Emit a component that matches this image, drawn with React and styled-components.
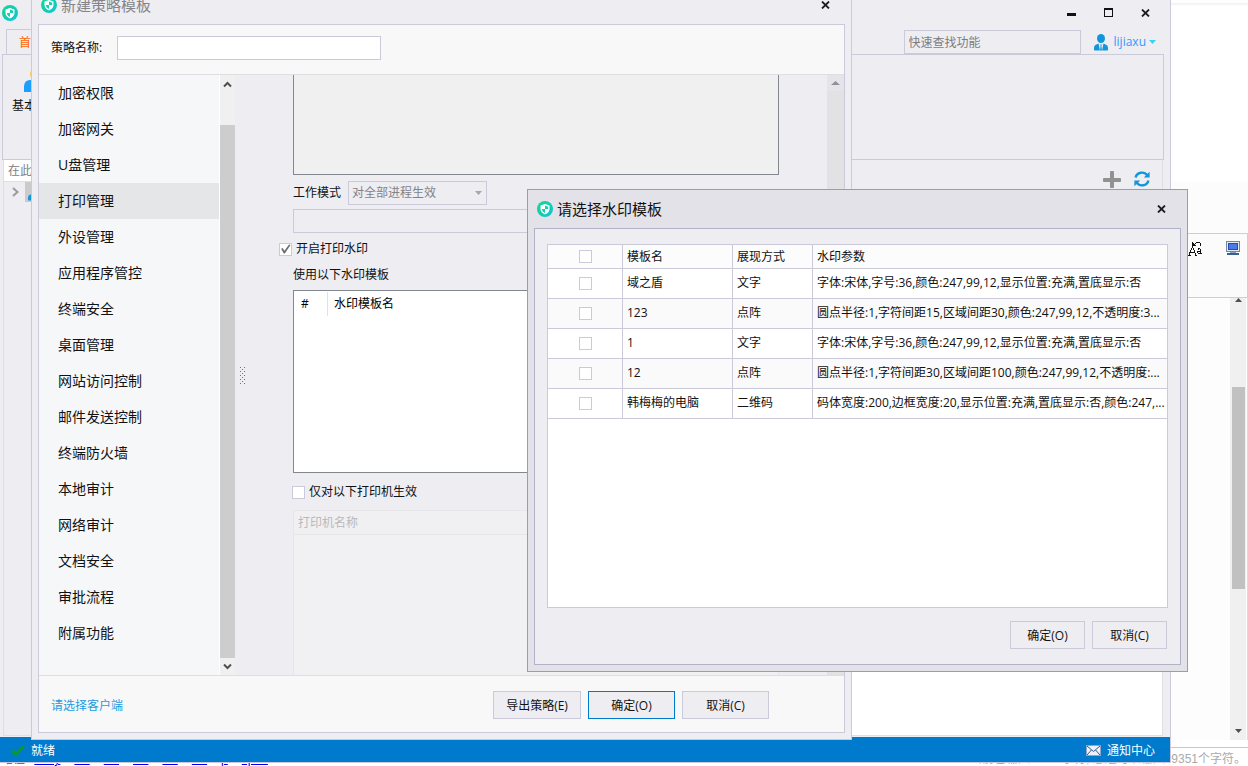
import React from "react";
import {useState} from "react";
import styled, { createGlobalStyle, css } from "styled-components";

const menuItems = [
  "加密权限", "加密网关", "U盘管理", "打印管理", "外设管理", "应用程序管控",
  "终端安全", "桌面管理", "网站访问控制", "邮件发送控制", "终端防火墙",
  "本地审计", "网络审计", "文档安全", "审批流程", "附属功能",
];

const templates = [
  { name: "域之盾", type: "文字", params: "字体:宋体,字号:36,颜色:247,99,12,显示位置:充满,置底显示:否" },
  { name: "123", type: "点阵", params: "圆点半径:1,字符间距15,区域间距30,颜色:247,99,12,不透明度:3..." },
  { name: "1", type: "文字", params: "字体:宋体,字号:36,颜色:247,99,12,显示位置:充满,置底显示:否" },
  { name: "12", type: "点阵", params: "圆点半径:1,字符间距30,区域间距100,颜色:247,99,12,不透明度:..." },
  { name: "韩梅梅的电脑", type: "二维码", params: "码体宽度:200,边框宽度:20,显示位置:充满,置底显示:否,颜色:247,..." },
];

const pathTags = ["body", "div", "div", "div", "div", "div", "p", "span"];

const Logo = () => (
  <svg width="16" height="16" viewBox="0 0 16 16">
    <defs>
      <linearGradient id="logoFill" x1="0" y1="0" x2="1" y2="1">
        <stop offset="0" stopColor="#12d68f" />
        <stop offset="1" stopColor="#12c4d6" />
      </linearGradient>
    </defs>
    <circle cx="8" cy="8" r="8" fill="url(#logoFill)" />
    <path d="M8 3 L12.5 4.6 V8 C12.5 10.6 10.6 12.3 8 13.4 C5.4 12.3 3.5 10.6 3.5 8 V4.6 Z" fill="#fff" />
    <path d="M8 4.6 L11.2 5.7 V8 H8 Z" fill="#14cfae" />
    <path d="M8 8 V12 C6.2 11.1 5 10 4.9 8 Z" fill="#14cfae" />
  </svg>
);

const CloseIcon = () => (
  <svg width="9" height="8" viewBox="0 0 9 8">
    <path d="M1 0.5 L8 7.5 M8 0.5 L1 7.5" stroke="#1e1e1e" strokeWidth="1.8" fill="none" />
  </svg>
);

const MinIcon = () => (
  <svg width="9" height="9" viewBox="0 0 9 9"><rect x="0" y="5" width="9" height="3" fill="#111" /></svg>
);

const MaxIcon = () => (
  <svg width="9" height="9" viewBox="0 0 9 9">
    <path d="M0 0 H9 V9 H0 Z M1 2 V8 H8 V2 Z" fill="#111" fillRule="evenodd" />
  </svg>
);

const UserIcon = () => (
  <svg width="14" height="17" viewBox="0 0 14 17">
    <ellipse cx="7" cy="4.5" rx="4" ry="4.5" fill="#1296db" />
    <path d="M4.6 9.6 L5.9 16.5 H0.6 Q0 16.5 0 15.6 V13.4 Q0.2 11 2.4 10.4 Z" fill="#1296db" />
    <path d="M9.4 9.6 L8.1 16.5 H13.4 Q14 16.5 14 15.6 V13.4 Q13.8 11 11.6 10.4 Z" fill="#1296db" />
    <path d="M6.2 10.6 H7.8 L7.4 12 L8 16.5 H6 L6.6 12 Z" fill="#1296db" />
  </svg>
);

const PlusIcon = () => (
  <svg width="18" height="17" viewBox="0 0 18 17">
    <rect x="7" y="0" width="4" height="17" rx="1" fill="#919191" />
    <rect x="0" y="7" width="18" height="4" rx="1" fill="#919191" />
  </svg>
);

const RefreshIcon = () => (
  <svg width="16" height="16" viewBox="0 0 16 16">
    <path d="M1.6 6.6 A6.4 6.2 0 0 1 13.2 4.4" stroke="#1296db" strokeWidth="2.4" fill="none" />
    <path d="M15.6 0.8 V6.6 H9.8 Z" fill="#1296db" />
    <path d="M14.4 9.4 A6.4 6.2 0 0 1 2.8 11.6" stroke="#1296db" strokeWidth="2.4" fill="none" />
    <path d="M0.4 15.2 V9.4 H6.2 Z" fill="#1296db" />
  </svg>
);

const CheckIcon = () => (
  <svg width="14" height="12" viewBox="0 0 14 12">
    <path d="M0 6.4 L2.2 4.4 L5 7.2 L11.6 0.4 L13.8 2 L5.2 11.4 Z" fill="#0c9a2e" />
  </svg>
);

const MailIcon = () => (
  <svg width="15" height="11" viewBox="0 0 15 11">
    <rect x="0.5" y="0.5" width="14" height="10" fill="#eef2f8" stroke="#8fa6c8" />
    <path d="M1 1 L7.5 6.5 L14 1 M1 10 L5.4 5 M14 10 L9.6 5" stroke="#33588e" fill="none" />
  </svg>
);

const CaseIcon = () => (
  <svg width="15" height="15" viewBox="0 0 15 15" fill="none" stroke="#111" shapeRendering="crispEdges">
    <path d="M1 14 L4.5 5.5 L8 14 M2.4 11 H6.8 M0 14 H2.5 M6.5 14 H9" />
    <path d="M9.6 8.5 Q11.5 7 12.8 8.6 V12.6 H14 M12.6 10 Q9.4 10 9.6 11.6 Q10.4 13.2 12.6 11.6" />
    <path d="M6 3.8 Q10 -1 12.6 2.4 V4.6" />
    <path d="M4.4 1 V5.4 H8.6 Z" fill="#111" stroke="none" />
  </svg>
);

const MonitorIcon = () => (
  <svg width="14" height="14" viewBox="0 0 14 14">
    <rect x="0.5" y="0.5" width="13" height="10" fill="#e4eaf2" stroke="#6f86a8" />
    <rect x="2" y="2" width="10" height="7" fill="#2749b4" />
    <rect x="3" y="3" width="8" height="5" fill="#4d79e4" />
    <path d="M4 11.5 H10" stroke="#8ba0bd" />
    <path d="M1 13 H13" stroke="#39618e" strokeWidth="2" />
  </svg>
);

const Chevron = ({ down }) => (
  <svg width="9" height="7" viewBox="0 0 9 7">
    <path d={down ? "M1 1.5 L4.5 5 L8 1.5" : "M1 5.5 L4.5 2 L8 5.5"} stroke="#505050" strokeWidth="2" fill="none" />
  </svg>
);

const Triangle = ({ down, color, size = 7 }) => (
  <svg width={size} height="4" viewBox="0 0 8 4" preserveAspectRatio="none">
    <path d={down ? "M0 0 H8 L4 4 Z" : "M0 4 H8 L4 0 Z"} fill={color} />
  </svg>
);

const TreeArrow = () => (
  <svg width="7" height="10" viewBox="0 0 7 10">
    <path d="M1 1 L5.5 5 L1 9" stroke="#9a9aa0" strokeWidth="2" fill="none" />
  </svg>
);

const GripDots = () => (
  <svg width="5" height="17" viewBox="0 0 5 17" fill="#707078">
    {[0, 4, 8, 12, 16].map((y) => (
      <g key={y}>
        <rect x="0" y={y} width="1" height="1" />
        <rect x="4" y={y} width="1" height="1" />
        {y < 16 && <rect x="2" y={y + 2} width="1" height="1" />}
      </g>
    ))}
  </svg>
);

const PeopleIcon = () => (
  <svg width="24" height="22" viewBox="0 0 24 22">
    <circle cx="10" cy="4" r="4" fill="#ffc94d" />
    <path d="M0 22 V16 Q0.5 10 6 10 H20 Q24 11 24 16 V22 Z" fill="#1e9fff" />
  </svg>
);

function Window({ title, area, modal, muted, children }) {
  return (
    <WindowFrame $area={area} $modal={modal} role="dialog" aria-label={title}>
      <WindowTitle $muted={muted}>
        <Logo />
        <h2>{title}</h2>
        <IconButton aria-label="关闭"><CloseIcon /></IconButton>
      </WindowTitle>
      <WindowBody $modal={modal}>{children}</WindowBody>
    </WindowFrame>
  );
}

function EditorPage() {
  return (
    <Editor>
      <EditorTop />
      <EditorTools>
        <IconButton $small aria-label="大小写"><CaseIcon /></IconButton>
        <IconButton $small aria-label="预览"><MonitorIcon /></IconButton>
      </EditorTools>
      <EditorContent>
        <PageScroll>
          <Triangle color="#505050" />
          <PageThumb />
          <Triangle down color="#505050" />
        </PageScroll>
      </EditorContent>
      <EditorStatus>
        <TagPath>
          <span>路径:</span>
          {pathTags.map((tag, index) => <a href="#path" key={index}>{tag}</a>)}
        </TagPath>
        <WordCount>当前已输入649个字符, 您还可以输入99351个字符。</WordCount>
      </EditorStatus>
    </Editor>
  );
}

function MainWindow() {
  return (
    <MainFrame>
      <MainTitle>
        <Logo />
        <WindowButtons>
          <IconButton aria-label="最小化"><MinIcon /></IconButton>
          <IconButton aria-label="最大化"><MaxIcon /></IconButton>
          <IconButton aria-label="关闭"><CloseIcon /></IconButton>
        </WindowButtons>
      </MainTitle>
      <TabRow>
        <Tab>首页</Tab>
        <SearchBox placeholder="快速查找功能" aria-label="快速查找功能" />
        <UserButton>
          <UserIcon />
          <span>lijiaxu</span>
          <Triangle down color="#2fd6f5" />
        </UserButton>
      </TabRow>
      <Ribbon>
        <RibbonButton>
          <PeopleIcon />
          <span>基本策略</span>
        </RibbonButton>
      </Ribbon>
      <MainArea>
        <TreePane>
          <TreeSearch placeholder="在此输入关键字" aria-label="搜索客户端" />
          <TreeRow>
            <TreeArrow />
            <TreeNode><UserIcon /></TreeNode>
          </TreeRow>
        </TreePane>
        <ClientPane>
          <ClientTools>
            <IconButton $small aria-label="添加"><PlusIcon /></IconButton>
            <IconButton $small aria-label="刷新"><RefreshIcon /></IconButton>
          </ClientTools>
          <ClientList />
        </ClientPane>
      </MainArea>
      <StatusBar>
        <StatusItem><CheckIcon />就绪</StatusItem>
        <StatusItem><MailIcon />通知中心</StatusItem>
      </StatusBar>
    </MainFrame>
  );
}

function PolicyWindow() {
  const [active, setActive] = useState("打印管理");
  const [watermark, setWatermark] = useState(true);
  const [printerOnly, setPrinterOnly] = useState(false);

  return (
    <Window title="新建策略模板" area="-15px 396px 26px 31px" muted>
      <PolicyHeader>
        <label htmlFor="policyName">策略名称:</label>
        <TextInput id="policyName" $width="264px" $white />
      </PolicyHeader>
      <PolicyContent>
        <Menu>
          {menuItems.map((item) => (
            <MenuItem key={item} $active={item === active} onClick={() => setActive(item)}>{item}</MenuItem>
          ))}
        </Menu>
        <MenuScroll>
          <Chevron />
          <MenuThumb />
          <Chevron down />
        </MenuScroll>
        <Splitter><GripDots /></Splitter>
        <Settings>
          <ProcessList aria-label="进程列表" disabled />
          <FieldRow>
            <label htmlFor="workMode">工作模式</label>
            <SelectWrap>
              <Select id="workMode" disabled>
                <option>对全部进程生效</option>
              </Select>
              <Triangle down color="#a6a6ac" />
            </SelectWrap>
          </FieldRow>
          <TextInput $width="100%" aria-label="进程" disabled />
          <CheckLabel $outdent>
            <Checkbox checked={watermark} onChange={() => setWatermark(!watermark)} />
            开启打印水印
          </CheckLabel>
          <Caption>使用以下水印模板</Caption>
          <WatermarkList>
            <table>
              <thead><tr><th>#</th><th>水印模板名</th></tr></thead>
            </table>
          </WatermarkList>
          <CheckLabel>
            <Checkbox checked={printerOnly} onChange={() => setPrinterOnly(!printerOnly)} />
            仅对以下打印机生效
          </CheckLabel>
          <PrinterList>
            <PrinterHead>打印机名称</PrinterHead>
          </PrinterList>
        </Settings>
        <SettingsScroll>
          <Triangle color="#919196" size={9} />
        </SettingsScroll>
      </PolicyContent>
      <PolicyFooter>
        <a href="#clients">请选择客户端</a>
        <ButtonRow>
          <Button $width={88}>导出策略(E)</Button>
          <Button $width={87} $primary>确定(O)</Button>
          <Button $width={87}>取消(C)</Button>
        </ButtonRow>
      </PolicyFooter>
    </Window>
  );
}

function WatermarkWindow() {
  const [picked, setPicked] = useState([]);

  const toggle = (name) => {
    setPicked(picked.includes(name) ? picked.filter((n) => n !== name) : [...picked, name]);
  };
  const allPicked = picked.length === templates.length;

  return (
    <Window title="请选择水印模板" area="189px 60px 94px 527px" modal>
      <ModalContent>
        <TableBox>
          <TemplateTable>
            <colgroup>
              <col width="75" /><col width="110" /><col width="80" /><col />
            </colgroup>
            <thead>
              <tr>
                <th>
                  <Checkbox
                    aria-label="全选"
                    checked={allPicked}
                    onChange={() => setPicked(allPicked ? [] : templates.map((t) => t.name))}
                  />
                </th>
                <th>模板名</th>
                <th>展现方式</th>
                <th>水印参数</th>
              </tr>
            </thead>
            <tbody>
              {templates.map((t) => (
                <tr key={t.name}>
                  <td><Checkbox aria-label={t.name} checked={picked.includes(t.name)} onChange={() => toggle(t.name)} /></td>
                  <td>{t.name}</td>
                  <td>{t.type}</td>
                  <td>{t.params}</td>
                </tr>
              ))}
            </tbody>
          </TemplateTable>
        </TableBox>
        <ButtonRow $inset={1}>
          <Button $width={75}>确定(O)</Button>
          <Button $width={75}>取消(C)</Button>
        </ButtonRow>
      </ModalContent>
    </Window>
  );
}

export default function App() {
  return (
    <>
      <GlobalStyle />
      <Desktop>
        <EditorPage />
        <MainWindow />
        <PolicyWindow />
        <WatermarkWindow />
      </Desktop>
    </>
  );
}

const line = "#cacadb";
const surface = "#eeedf2";

const GlobalStyle = createGlobalStyle`
  * {
    box-sizing: border-box;
  }
  body {
    margin: 0;
    overflow: hidden;
  }
  body, button, input, select, textarea {
    font-family: "Open Sans", "Noto Sans CJK SC", sans-serif;
    font-size: 12px;
    line-height: 16px;
    color: #111;
  }
  svg {
    display: block;
    flex: none;
  }
`;

const Desktop = styled.div`
  position: relative;
  height: 100vh;
  overflow: hidden;
  background: #fff;
`;

const IconButton = styled.button`
  display: flex;
  align-items: center;
  justify-content: center;
  width: ${(p) => (p.$small ? "auto" : "37px")};
  height: ${(p) => (p.$small ? "auto" : "25px")};
  padding: 0;
  border: none;
  background: none;
`;

const Button = styled.button`
  width: ${(p) => p.$width}px;
  height: 28px;
  padding: 2px 0 0;
  border: 1px solid ${(p) => (p.$primary ? "#007acc" : line)};
  background: ${surface};
  white-space: nowrap;
`;

const ButtonRow = styled.div`
  display: flex;
  justify-content: flex-end;
  gap: 7px;
  padding-right: ${(p) => p.$inset || 0}px;
`;

const TextInput = styled.input`
  display: block;
  width: ${(p) => p.$width};
  height: 24px;
  padding: 0 4px;
  border: 1px solid ${line};
  background: ${(p) => (p.$white ? "#fff" : surface)};
`;

const Checkbox = styled.input.attrs({ type: "checkbox" })`
  appearance: none;
  display: block;
  flex: none;
  width: 13px;
  height: 13px;
  margin: 0;
  border: 1px solid ${line};
  background: #fff;
  &:checked::before {
    content: "";
    display: block;
    height: 11px;
    background: #707070;
    clip-path: polygon(10% 48%, 25% 42%, 40% 65%, 82% 8%, 96% 14%, 44% 92%, 34% 92%);
  }
`;

/* page behind all windows */

const Editor = styled.div`
  display: flex;
  flex-direction: column;
  height: 100vh;
`;

const EditorTop = styled.div`
  height: 233px;
  border-top: 3px solid #fff;
  background: linear-gradient(#efefef, #fff 3px, #fff 177px, #fcfcfc 180px);
`;

const EditorTools = styled.div`
  display: flex;
  align-items: flex-start;
  justify-content: flex-end;
  gap: 23px;
  height: 65px;
  padding: 7px 7px 0 0;
  border: solid #cfcfcf;
  border-width: 1px 1px 1px 0;
  background: #fbfbfb;
`;

const EditorContent = styled.div`
  display: flex;
  flex: 1;
  justify-content: flex-end;
  padding-right: 1px;
  border-right: 1px solid #dadada;
  background: #fdfdfd;
`;

const PageScroll = styled.div`
  display: flex;
  flex-direction: column;
  align-items: center;
  width: 16px;
  padding-bottom: 7px;
  background: #f0f0f0;
`;

const PageThumb = styled.div`
  flex: 0 1 202px;
  width: 13px;
  margin: 85px 0 auto;
  background: #c1c1c1;
`;

const EditorStatus = styled.div`
  display: flex;
  align-items: center;
  justify-content: space-between;
  height: 26px;
  padding: 0 2px 0 1px;
  border-top: 7px solid #fff;
  box-shadow: inset 0 1px #c8c8c8;
  font-family: "Liberation Sans", "Noto Sans CJK SC", sans-serif;
  white-space: nowrap;
`;

const TagPath = styled.div`
  display: flex;
  gap: 14px;
  padding-top: 5px;
  color: #555;
  span {
    margin-right: -8px;
  }
  a {
    color: #0000ee;
  }
`;

const WordCount = styled.div`
  padding-top: 5px;
  color: #aaa;
`;

/* main application window */

const MainFrame = styled.div`
  position: absolute;
  inset: 0 77px 3px 0;
  display: flex;
  flex-direction: column;
  border: solid ${line};
  border-width: 0 1px 1px 0;
  background: ${surface};
`;

const MainTitle = styled.div`
  display: flex;
  align-items: flex-start;
  justify-content: space-between;
  height: 29px;
  padding: 0 6px 0 2px;
  > svg {
    margin-top: 5px;
  }
`;

const WindowButtons = styled.div`
  display: flex;
`;

const TabRow = styled.div`
  display: flex;
  height: 25px;
  padding: 0 14px 0 6px;
  align-items: flex-end;
`;

const Tab = styled.button`
  height: 25px;
  width: 50px;
  padding: 2px 12px 0;
  margin-right: auto;
  border: 1px solid ${line};
  border-bottom: none;
  background: ${surface};
  color: #ff6600;
`;

const SearchBox = styled.input`
  width: 177px;
  height: 24px;
  padding: 0 4px;
  border: 1px solid ${line};
  background: ${surface};
  &::placeholder {
    color: #7c7c80;
    opacity: 1;
  }
`;

const UserButton = styled.button`
  display: flex;
  align-items: center;
  height: 24px;
  padding: 0;
  margin-left: 13px;
  border: none;
  background: none;
  color: #3399ff;
  span {
    margin: 0 3px 0 6px;
  }
`;

const Ribbon = styled.div`
  height: 106px;
  margin: 0 6px 0 2px;
  padding: 15px 9px;
  border: 1px solid ${line};
`;

const RibbonButton = styled.button`
  display: flex;
  flex-direction: column;
  align-items: center;
  gap: 6px;
  padding: 0;
  border: none;
  background: none;
`;

const MainArea = styled.div`
  display: flex;
  flex: 1;
  gap: 4px;
  min-height: 0;
  padding: 0 7px 1px 3px;
`;

const TreePane = styled.div`
  width: 260px;
  border: 1px solid #dedee3;
  border-top: none;
`;

const TreeSearch = styled.input`
  display: block;
  width: 100%;
  height: 22px;
  padding: 0 4px;
  border: none;
  border-bottom: 1px solid #dedee3;
  background: #fff;
  &::placeholder {
    color: #808084;
    opacity: 1;
  }
`;

const TreeRow = styled.div`
  display: flex;
  align-items: center;
  gap: 6px;
  height: 20px;
  padding-left: 8px;
`;

const TreeNode = styled.div`
  display: flex;
  align-items: center;
  height: 20px;
  flex: 1;
  padding-left: 3px;
  background: #cbcbcb;
`;

const ClientPane = styled.div`
  display: flex;
  flex: 1;
  flex-direction: column;
  border: 1px solid #dedee3;
  border-top: none;
`;

const ClientTools = styled.div`
  display: flex;
  align-items: center;
  justify-content: flex-end;
  gap: 13px;
  height: 38px;
  padding-right: 12px;
`;

const ClientList = styled.div`
  flex: 1;
  background: #fff;
`;

const StatusBar = styled.div`
  display: flex;
  align-items: center;
  justify-content: space-between;
  height: 25px;
  padding: 2px 15px 0 11px;
  background: #007acc;
  color: #fff;
`;

const StatusItem = styled.div`
  display: flex;
  align-items: center;
  gap: 6px;
`;

/* dialog frame, shared by both dialogs */

const WindowFrame = styled.section`
  position: absolute;
  inset: ${(p) => p.$area};
  display: flex;
  flex-direction: column;
  padding: 0 6px 6px;
  border: 1px solid ${(p) => (p.$modal ? "#9a9bb4" : line)};
  background: ${(p) => (p.$modal ? "#e3e2e8" : surface)};
`;

const WindowTitle = styled.header`
  display: flex;
  align-items: center;
  gap: 4px;
  height: 38px;
  padding: 0 1px 0 3px;
  h2 {
    flex: 1;
    margin: 0;
    font-size: 15px;
    font-weight: 400;
    line-height: 20px;
    color: ${(p) => (p.$muted ? "#858588" : "#111")};
  }
`;

const WindowBody = styled.div`
  display: flex;
  flex: 1;
  flex-direction: column;
  min-height: 0;
  border: 1px solid ${(p) => (p.$modal ? "#b1b2c8" : line)};
  background: ${surface};
`;

/* policy dialog */

const PolicyHeader = styled.div`
  display: flex;
  align-items: center;
  height: 50px;
  padding: 0 12px 4px;
  border-bottom: 1px solid #dfdfe1;
  background: #f8f8f8;
  label {
    width: 66px;
  }
`;

const PolicyContent = styled.div`
  display: flex;
  flex: 1;
  min-height: 0;
`;

const Menu = styled.nav`
  width: 181px;
  border-right: 1px solid #fff;
  background: #f5f7f9;
`;

const MenuItem = styled.button`
  display: block;
  width: 100%;
  height: 36px;
  padding: 0 19px;
  border: none;
  background: ${(p) => (p.$active ? "#e5e6e8" : "none")};
  font-size: 14px;
  line-height: 20px;
  text-align: left;
`;

const scrollColumn = css`
  display: flex;
  flex-direction: column;
  align-items: center;
`;

const MenuScroll = styled.div`
  ${scrollColumn}
  width: 15px;
  padding: 6px 0 5px;
  background: #f0f0f0;
`;

const MenuThumb = styled.div`
  flex: 1;
  width: 15px;
  margin: 37px 0 5px;
  background: #cdcdcd;
`;

const Splitter = styled.div`
  display: flex;
  align-items: center;
  justify-content: center;
  width: 15px;
`;

const Settings = styled.div`
  flex: 1;
  min-width: 0;
  padding: 0 48px 0 43px;
  overflow: hidden;
`;

const ProcessList = styled.textarea`
  display: block;
  width: 100%;
  height: 100px;
  border: 1px solid #828790;
  border-top: none;
  background: #f0f0f0;
  resize: none;
`;

const FieldRow = styled.div`
  display: flex;
  align-items: center;
  gap: 7px;
  margin: 6px 0 4px;
`;

const SelectWrap = styled.div`
  display: grid;
  align-items: center;
  > * {
    grid-area: 1 / 1;
  }
  svg {
    justify-self: end;
    margin-right: 5px;
  }
`;

const Select = styled.select`
  appearance: none;
  width: 139px;
  height: 24px;
  padding: 0 3px;
  border: 1px solid ${line};
  border-radius: 0;
  background: ${surface};
  color: #838387;
  opacity: 1;
`;

const CheckLabel = styled.label`
  display: flex;
  align-items: center;
  gap: 4px;
  height: 16px;
  margin: ${(p) => (p.$outdent ? "8px 0 0 -14px" : "11px 0 0 -1px")};
`;

const Caption = styled.p`
  margin: 10px 0 7px;
`;

const WatermarkList = styled.div`
  height: 183px;
  padding: 1px;
  border: 1px solid #828790;
  background: #fff;
  table {
    border-collapse: separate;
    border-spacing: 0;
  }
  th {
    height: 24px;
    padding: 0 6px;
    font-weight: 400;
    text-align: left;
    color: #000;
  }
  th:first-child {
    width: 33px;
    border-right: 1px solid #e2e2e4;
  }
`;

const PrinterList = styled.div`
  height: 240px;
  margin-top: 10px;
  border: 1px solid #e6e6e9;
  background: #f1f1f3;
`;

const PrinterHead = styled.div`
  height: 24px;
  padding: 4px;
  border-bottom: 1px solid #e6e6e9;
  background: #f0f0f2;
  color: #b9b9bd;
`;

const SettingsScroll = styled.div`
  ${scrollColumn}
  width: 17px;
  padding-top: 6px;
  background: linear-gradient(#e5e4ea 16px, #e2e2e4 16px);
`;

const PolicyFooter = styled.div`
  display: flex;
  align-items: center;
  justify-content: space-between;
  height: 57px;
  padding: 2px 75px 0 12px;
  border-top: 1px solid #dfdfe1;
  background: #f8f8f8;
  a {
    padding-top: 2px;
    color: #1e9be0;
    text-decoration: none;
  }
`;

/* watermark dialog */

const ModalContent = styled.div`
  display: flex;
  flex: 1;
  flex-direction: column;
  gap: 13px;
  padding: 15px 12px;
`;

const TableBox = styled.div`
  flex: 1;
  border: 1px solid ${line};
  background: #fff;
`;

const TemplateTable = styled.table`
  width: 100%;
  table-layout: fixed;
  border-collapse: separate;
  border-spacing: 0;
  th, td {
    height: 30px;
    padding: 0 2px 2px 4px;
    border-right: 1px solid ${line};
    border-bottom: 1px solid ${line};
    font-weight: 400;
    text-align: left;
    white-space: nowrap;
    overflow: hidden;
  }
  th {
    height: 24px;
    padding-bottom: 0;
    background: #fcfcfc;
  }
  th:last-child, td:last-child {
    border-right: none;
  }
  th:first-child, td:first-child {
    padding: 0 2px;
  }
  tbody tr:nth-child(even) {
    background: #fafafa;
  }
  input {
    margin: 0 auto;
  }
`;
